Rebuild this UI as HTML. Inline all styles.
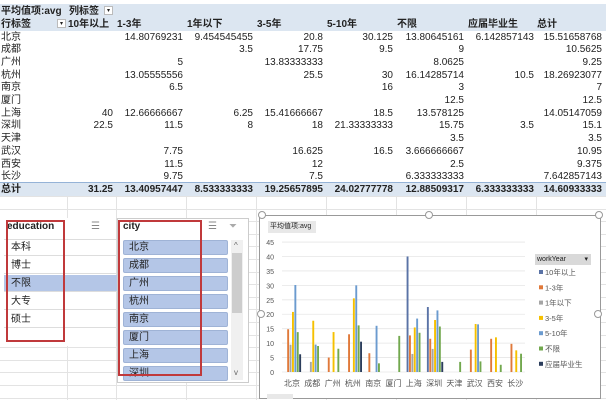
<!DOCTYPE html>
<html><head><meta charset="utf-8"><style>
*{margin:0;padding:0;box-sizing:border-box}
body{width:606px;height:400px;overflow:hidden;background:#fff;position:relative;font-family:"Liberation Sans","Noto Sans CJK SC",sans-serif;font-size:10px;color:#222}
.a{position:absolute;white-space:nowrap;line-height:12px}
.r{text-align:right}
</style></head><body>
<div id="grid"></div>
<div class="a" style="left:0;top:4px;width:606px;height:27px;background:#dce6f1"></div>
<div class="a" style="left:0;top:182px;width:606px;height:14px;background:#dce6f1;border-top:1px solid #95b3d7"></div>
<div id="t"></div>
<div class="a" style="left:0;top:218px;width:117px;height:128px;background:#fff;border-right:1px solid #ddd"></div>
<div class="a" style="left:117px;top:218px;width:132px;height:165px;background:#fff;border:1px solid #ccc"></div>
<div class="a" style="left:7px;top:221px;font-size:10px;font-weight:bold">education</div>
<div class="a" style="left:91px;top:221px;color:#888">☰</div>
<div class="a" style="left:123px;top:221px;font-weight:bold">city</div>
<div class="a" style="left:208px;top:221px;color:#888">☰</div>
<div class="a" style="left:229px;top:221px;color:#aaa">⏷</div>
<div id="sl"></div>
<div class="a" style="left:231px;top:240px;width:12px;height:140px;background:#f0f0f0"></div>
<div class="a" style="left:232px;top:253px;width:10px;height:60px;background:#cdcdcd"></div>
<div class="a" style="left:234px;top:240px;font-size:8px;color:#666">^</div>
<div class="a" style="left:234px;top:367px;font-size:8px;color:#666">v</div>
<div class="a" style="left:6px;top:220px;width:59px;height:122px;border:2px solid #c0393b"></div>
<div class="a" style="left:118px;top:220px;width:84px;height:156px;border:2px solid #c0393b"></div>
<div class="a" style="left:259px;top:215px;width:342px;height:184px;background:#fff;border:1px solid #999"></div>
<div class="a" style="left:268px;top:221px;width:48px;height:12px;background:#e8e8e8;font-size:7px;line-height:12px;padding-left:2px">平均值项:avg</div>
<div class="a" style="left:267px;top:394px;width:26px;height:5px;background:#e8e8e8"></div>
<div class="a" style="left:535px;top:254px;width:56px;height:11px;background:#d9d9d9;font-size:7px;line-height:11px;padding-left:2px">workYear<span style="float:right;padding-right:3px">▾</span></div>
<svg id="ch" class="a" style="left:0;top:0" width="606" height="400"></svg>
<script>
var H='';
for(var x of [67,116,186,256,326,396,466,536])H+='<div class="a" style="left:'+x+'px;top:196px;width:1px;height:204px;background:#e3e3e3"></div>';
for(var y=196;y<400;y+=12.6)H+='<div class="a" style="left:0;top:'+y+'px;width:606px;height:1px;background:#e3e3e3"></div>';
document.getElementById('grid').innerHTML=H;
var T='';
function tx(x,y,s,b,right){T+='<div class="a'+(right?' r':'')+'" style="'+(right?'left:'+(x-80)+'px;width:80px':'left:'+x+'px')+';top:'+y+'px;'+(b?'font-weight:bold':'')+'">'+s+'</div>';}
tx(1,6,'平均值项:avg',1);tx(69,6,'列标签',1);
T+='<div class="a" style="left:104px;top:6px;width:9px;height:9px;background:#fff;border:1px solid #bbb;font-size:6px;text-align:center;line-height:8px">▾</div>';
T+='<div class="a" style="left:57px;top:19px;width:9px;height:9px;background:#fff;border:1px solid #bbb;font-size:6px;text-align:center;line-height:8px">▾</div>';
tx(1,19,'行标签',1);
var hd=['10年以上','1-3年','1年以下','3-5年','5-10年','不限','应届毕业生','总计'],hx=[68,117,187,257,327,397,468,537];
hd.forEach((h,i)=>tx(hx[i],19,h,1));
var rx=[113,183,253,323,393,464,534,602];
var rows=[['北京','','14.80769231','9.454545455','20.8','30.125','13.80645161','6.142857143','15.51658768'],
['成都','','','3.5','17.75','9.5','9','','10.5625'],
['广州','','5','','13.83333333','','8.0625','','9.25'],
['杭州','','13.05555556','','25.5','30','16.14285714','10.5','18.26923077'],
['南京','','6.5','','','16','3','','7'],
['厦门','','','','','','12.5','','12.5'],
['上海','40','12.66666667','6.25','15.41666667','18.5','13.578125','','14.05147059'],
['深圳','22.5','11.5','8','18','21.33333333','15.75','3.5','15.1'],
['天津','','','','','','3.5','','3.5'],
['武汉','','7.75','','16.625','16.5','3.666666667','','10.95'],
['西安','','11.5','','12','','2.5','','9.375'],
['长沙','','9.75','','7.5','','6.333333333','','7.642857143']];
rows.forEach((r,j)=>{var y=31.5+j*12.7;tx(1,y,r[0]);for(var i=1;i<9;i++)if(r[i])tx(rx[i-1],y,r[i],0,1);});
var tot=['31.25','13.40957447','8.533333333','19.25657895','24.02777778','12.88509317','6.333333333','14.60933333'];
tx(1,184,'总计',1);tot.forEach((v,i)=>tx(rx[i],184,v,1,1));
document.getElementById('t').innerHTML=T;
var S='';
['本科','博士','不限','大专','硕士'].forEach((s,i)=>{var y=239+i*18;
S+='<div class="a" style="left:4px;top:'+y+'px;width:113px;height:17px;border-bottom:1px solid #ddd;'+(i==2?'background:#b4c6e7;':'')+'padding:3px 7px">'+s+'</div>';});
S+='<div class="a" style="left:4px;top:239px;width:113px;height:1px;background:#ddd"></div>';
['北京','成都','广州','杭州','南京','厦门','上海','深圳'].forEach((s,i)=>{var y=240+i*18;
S+='<div class="a" style="left:123px;top:'+y+'px;width:105px;height:15px;background:#b4c6e7;border:1px solid #9fb3d6;border-radius:2px;padding:1px 5px">'+s+'</div>';});
document.getElementById('sl').innerHTML=S;
var C='';
for(var k=0;k<=9;k++){var y=372-k*14.44;C+='<line x1="282" x2="525" y1="'+y+'" y2="'+y+'" stroke="#e6e6e6" stroke-width="0.8"/><text x="274" y="'+(y+3)+'" font-size="7" fill="#555" text-anchor="end" font-family="Liberation Sans">'+(k*5)+'</text>';}
var cols=['#5a73a6','#e0793a','#a5a5a5','#f5c000','#6b9bcf','#72a84e','#2b3d5c'];
var d=[[0,14.81,9.45,20.8,30.125,13.81,6.14],[0,0,3.5,17.75,9.5,9,0],[0,5,0,13.83,0,8.06,0],[0,13.06,0,25.5,30,16.14,10.5],[0,6.5,0,0,16,3,0],[0,0,0,0,0,12.5,0],[40,12.67,6.25,15.42,18.5,13.58,0],[22.5,11.5,8,18,21.33,15.75,3.5],[0,0,0,0,0,3.5,0],[0,7.75,0,16.625,16.5,3.67,0],[0,11.5,0,12,0,2.5,0],[0,9.75,0,7.5,0,6.33,0]];
var cn=['北京','成都','广州','杭州','南京','厦门','上海','深圳','天津','武汉','西安','长沙'];
d.forEach((r,j)=>{var c=292+j*20.3;r.forEach((v,i)=>{if(v){var h=v*2.888;C+='<rect x="'+(c-7.2+2.4*i)+'" y="'+(372-h)+'" width="1.9" height="'+h+'" fill="'+cols[i]+'"/>';}});
C+='<text x="'+c+'" y="386" font-size="8" fill="#555" text-anchor="middle" font-family="Noto Sans CJK SC">'+cn[j]+'</text>';});
var lg=['10年以上','1-3年','1年以下','3-5年','5-10年','不限','应届毕业生'];
lg.forEach((s,i)=>{var y=273+i*15.3;C+='<rect x="539" y="'+(y-3)+'" width="4" height="4" fill="'+cols[i]+'"/><text x="545" y="'+(y+2)+'" font-size="7.5" fill="#555" font-family="Liberation Sans,Noto Sans CJK SC">'+s+'</text>';});
[[262,215],[429,215],[599,215],[261,314],[598,314]].forEach(p=>C+='<circle cx="'+p[0]+'" cy="'+p[1]+'" r="3.5" fill="#fff" stroke="#999"/>');
document.getElementById('ch').innerHTML=C;
</script>
</body></html>
